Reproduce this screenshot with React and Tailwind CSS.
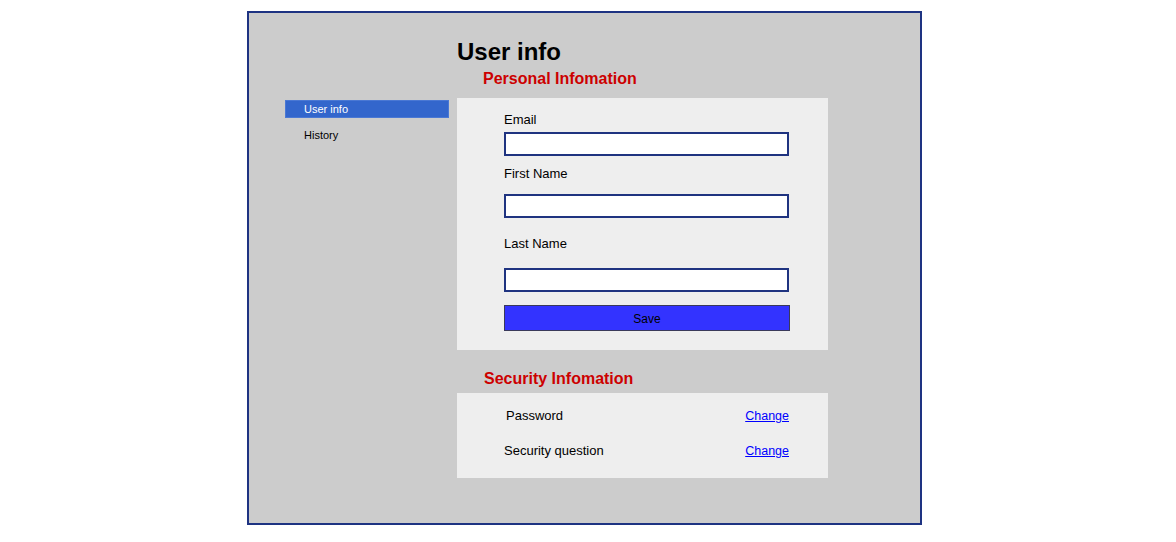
import React from "react";

const Field = ({ label, labelGap, topGap }) => (
  <div className={topGap}>
    <div className="text-[13px] leading-4 text-black">{label}</div>
    <input
      type="text"
      className={`${labelGap} block w-[285px] h-6 bg-white border-2 border-[#1f3380] outline-none`}
    />
  </div>
);

const SecurityRow = ({ label, indent }) => (
  <div className="flex items-center justify-between h-4">
    <span className={`${indent} text-[13px] leading-4 text-black`}>{label}</span>
    <a href="#" className="text-[12.5px] leading-4 text-[#0000ff] underline">
      Change
    </a>
  </div>
);

export default function App() {
  return (
    <div className="w-[1176px] h-[542px] bg-white pt-[11px] pl-[247px] font-['Liberation_Sans',Arial,sans-serif]">
      <div className="w-[675px] h-[514px] bg-[#cccccc] border-2 border-[#1e3382] flex">
        {/* Sidebar */}
        <div className="w-[164px] ml-[36px] mt-[87px] text-[11px]">
          <div className="h-[18px] bg-[#3366cc] border border-[#4a78d4] text-white pl-[18px] leading-4">
            User info
          </div>
          <div className="pl-[19px] mt-[9px] leading-4 text-black">History</div>
        </div>

        {/* Main */}
        <div className="ml-[8px] mt-[25px] w-[371px]">
          <h1 className="text-[24px] leading-7 font-bold text-black">User info</h1>
          <h2 className="ml-[26px] mt-[3px] text-[16px] leading-5 font-bold text-[#cc0000]">
            Personal Infomation
          </h2>

          <div className="mt-[9px] bg-[#eeeeee] h-[252px] pl-[47px] pt-[14px]">
            <Field label="Email" labelGap="mt-[4px]" topGap="" />
            <Field label="First Name" labelGap="mt-[12px]" topGap="mt-[10px]" />
            <Field label="Last Name" labelGap="mt-[16px]" topGap="mt-[18px]" />
            <button className="mt-[13px] w-[286px] h-[26px] bg-[#3333ff] border border-[#3a3a5a] text-[12px] leading-4 text-black pt-[2px]">
              Save
            </button>
          </div>

          <h2 className="ml-[27px] mt-[19px] text-[16px] leading-5 font-bold text-[#cc0000]">
            Security Infomation
          </h2>
          <div className="mt-[4px] bg-[#eeeeee] h-[85px] pl-[47px] pr-[39px] pt-[15px] flex flex-col gap-[19px]">
            <SecurityRow label="Password" indent="ml-[2px]" />
            <SecurityRow label="Security question" indent="" />
          </div>
        </div>
      </div>
    </div>
  );
}
